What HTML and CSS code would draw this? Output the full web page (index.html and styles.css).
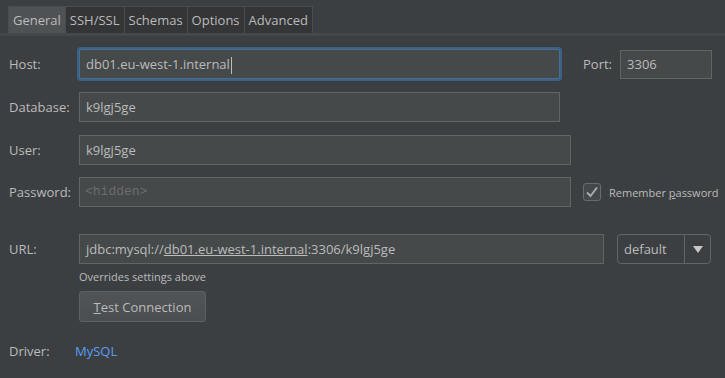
FILE: index.html
```html
<!DOCTYPE html>
<html lang="en">
<head>
    <meta charset="UTF-8">
    <title>Data Source Settings</title>
    <link rel="stylesheet" href="styles.css">
</head>
<body>
    <div class="tabs">
        <div class="tab selected">General</div>
        <div class="tab">SSH/SSL</div>
        <div class="tab">Schemas</div>
        <div class="tab">Options</div>
        <div class="tab">Advanced</div>
    </div>

    <div class="form">
        <div class="row">
            <label class="label">Host:</label>
            <div class="field host focused">db01.eu-west-1.internal<span class="caret"></span></div>
            <label class="label port-label">Port:</label>
            <div class="field port">3306</div>
        </div>
        <div class="row">
            <label class="label">Database:</label>
            <div class="field host">k9lgj5ge</div>
        </div>
        <div class="row user-row">
            <label class="label">User:</label>
            <div class="field wide">k9lgj5ge</div>
        </div>
        <div class="row">
            <label class="label">Password:</label>
            <div class="field wide placeholder">&lt;hidden&gt;</div>
            <div class="checkbox">
                <svg width="14" height="12" viewBox="0 0 14 12"><path d="M2 6.5 L5.5 10 L12 1.5" fill="none" stroke="#a9a9a9" stroke-width="2"/></svg>
            </div>
            <span class="check-label">Remember <u>p</u>assword</span>
        </div>
        <div class="row url-row">
            <label class="label">URL:</label>
            <div class="field url">jdbc:mysql://<u>db01.eu-west-1.internal</u>:3306/k9lgj5ge</div>
            <div class="select">
                <span class="select-value">default</span>
                <span class="select-arrow"><svg width="10" height="7" viewBox="0 0 10 7"><path d="M0 0 H10 L5 7 Z" fill="#c8c8c8"/></svg></span>
            </div>
        </div>
        <div class="hint">Overrides settings above</div>
        <button class="button"><u>T</u>est Connection</button>
        <div class="row driver-row">
            <label class="label driver-label">Driver:</label>
            <a class="link" href="#">MySQL</a>
        </div>
    </div>
</body>
</html>
```

FILE: styles.css
```css
body {
    margin: 0;
    background-color: #3c3f41;
    color: #bbbbbb;
    font-family: "Open Sans", "Noto Sans", sans-serif;
    font-size: 13px;
}
.tabs {
    display: flex;
    padding: 6px 0 0 8px;
    border-bottom: 3px solid #45484a;
}
.tab {
    height: 26px;
    line-height: 26px;
    padding: 0 4px;
    background-color: #333536;
    border: 1px solid #4a4d4f;
    border-bottom: none;
    border-left: none;
}
.tab:first-child {
    border-left: 1px solid #4a4d4f;
}
.tab.selected {
    background-color: #4e5254;
}
.form {
    padding: 13px 0 0 9px;
}
.row {
    display: flex;
    align-items: center;
    height: 30px;
    margin-bottom: 13px;
}
.user-row {
    margin-bottom: 12px;
}
.label {
    width: 70px;
    flex-shrink: 0;
}
.field {
    box-sizing: border-box;
    height: 30px;
    line-height: 28px;
    padding: 0 6px;
    background-color: #45494a;
    border: 1px solid #646464;
    white-space: nowrap;
}
.field.host {
    width: 481px;
}
.field.focused {
    border-color: #466d94;
    box-shadow: 0 0 0 2px #3d6185;
    border-radius: 2px;
}
.caret {
    display: inline-block;
    width: 1px;
    height: 17px;
    margin-left: 1px;
    vertical-align: middle;
    background-color: #bbbbbb;
}
.port-label {
    width: auto;
    margin-left: 23px;
    margin-right: 8px;
}
.field.port {
    width: 92px;
    height: 29px;
    line-height: 27px;
}
.field.wide {
    width: 492px;
}
.field.placeholder {
    color: #6c6c6c;
    font-family: "Liberation Mono", monospace;
    padding-left: 5px;
}
.checkbox {
    box-sizing: border-box;
    width: 18px;
    height: 18px;
    margin-left: 12px;
    border: 1px solid #6b6b6b;
    border-radius: 3px;
    background-color: #43494a;
    display: flex;
    align-items: center;
    justify-content: center;
}
.check-label {
    margin-left: 8px;
    font-size: 11px;
}
.url-row {
    margin-top: 27px;
    margin-bottom: 6px;
}
.field.url {
    width: 525px;
}
.select {
    box-sizing: border-box;
    display: flex;
    width: 94px;
    height: 30px;
    margin-left: 13px;
    border: 1px solid #646464;
    border-radius: 4px;
}
.select-value {
    flex: 1;
    line-height: 28px;
    padding-left: 6px;
}
.select-arrow {
    width: 25px;
    border-left: 1px solid #646464;
    display: flex;
    align-items: center;
    justify-content: center;
}
.hint {
    margin-left: 70px;
    font-size: 11px;
    line-height: 14px;
}
.button {
    display: block;
    box-sizing: border-box;
    width: 127px;
    height: 31px;
    margin: 7px 0 0 70px;
    background: linear-gradient(#505456, #4a4e50);
    border: 1px solid #5e6163;
    border-radius: 3px;
    color: #bbbbbb;
    font-family: inherit;
    font-size: 13px;
    padding: 0;
}
.driver-row {
    margin-top: 14px;
}
.driver-label {
    width: 66px;
}
.link {
    color: #589df6;
    text-decoration: none;
}
```
